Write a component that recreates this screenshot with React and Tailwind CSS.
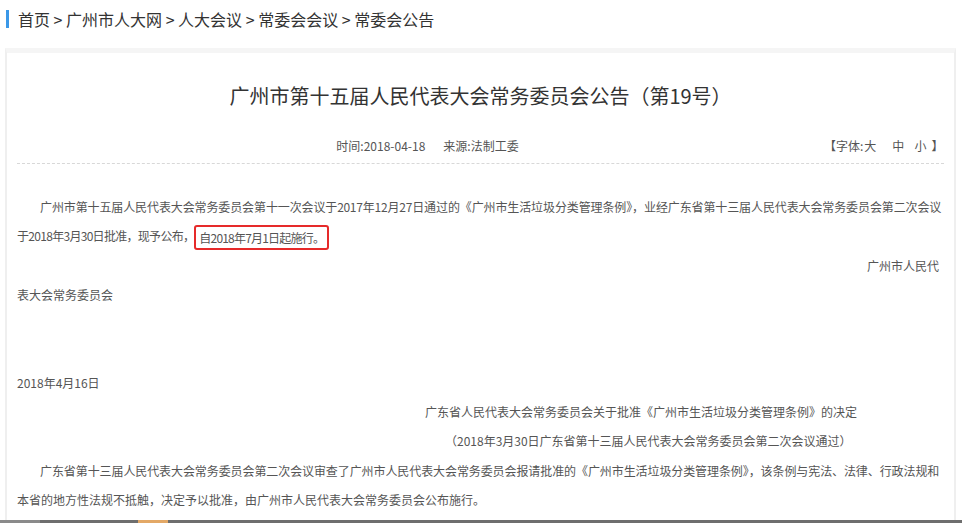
import React from "react";

const FONT = { fontFamily: '"Noto Sans CJK SC", "Noto Sans", sans-serif' };

export default function App() {
  return (
    <div className="h-[523px] w-full overflow-hidden bg-white flex flex-col" style={FONT}>
      {/* breadcrumb */}
      <div className="h-[48px] flex items-start pt-[7px] pl-[6px]">
        <div className="flex items-center h-[24px]">
          <span className="w-[3px] h-[18px] bg-[#3b98e8] mr-[9px]"></span>
          <span className="text-[16px] leading-[24px] text-[#333]">
            首页 &gt; 广州市人大网 &gt; 人大会议 &gt; 常委会会议 &gt; 常委会公告
          </span>
        </div>
      </div>

      {/* card */}
      <div className="flex-1 ml-[5px] mr-[6px] border-x-2 border-[#efefef] border-t-[5px] border-t-[#f5f5f5] px-[10px] min-h-0">
        <h1 className="pt-[28px] h-[58px] text-center text-[20px] leading-[30px] text-[#333] font-normal">
          广州市第十五届人民代表大会常务委员会公告（第19号）
        </h1>
        <div className="mt-[25px] flex h-[20px] items-center text-[12px] leading-[20px] text-[#555]">
          <div className="flex-1 min-w-0 text-center pl-[14px] whitespace-nowrap">
            <span>时间:2018-04-18</span>
            <span className="ml-[18px]">来源:法制工委</span>
          </div>
          <div className="w-[120px] shrink-0 flex whitespace-nowrap">
            <span>【字体:</span>
            <span className="ml-[1px]">大</span>
            <span className="ml-[16px]">中</span>
            <span className="ml-[10px]">小</span>
            <span className="ml-[5px]">】</span>
          </div>
        </div>
        <div className="mt-[7px] border-b border-dashed border-[#d8d8d8]"></div>

        <div className="pt-[28px] text-[12px] leading-[29.3px] text-[#555]">
          <div className="pl-[23px] pr-[3px] tracking-[-0.35px] text-justify [text-align-last:justify]">
            广州市第十五届人民代表大会常务委员会第十一次会议于2017年12月27日通过的《广州市生活垃圾分类管理条例》，业经广东省第十三届人民代表大会常务委员会第二次会议
          </div>
          <div className="h-[29.3px] tracking-[-0.7px] whitespace-nowrap">
            于2018年3月30日批准，现予公布，
            <span className="inline-block align-middle border-2 border-[#e62a2a] rounded-[3px] px-[3px] leading-[21px] -mt-[2px] tracking-[-0.8px]">
              自2018年7月1日起施行。
            </span>
          </div>
          <div className="text-right pr-[5px]">广州市人民代</div>
          <div>表大会常务委员会</div>
          <div className="h-[29.3px]"></div>
          <div className="h-[29.3px]"></div>
          <div>2018年4月16日</div>
          <div className="pl-[408px]">广东省人民代表大会常务委员会关于批准《广州市生活垃圾分类管理条例》的决定</div>
          <div className="pl-[428px]">（2018年3月30日广东省第十三届人民代表大会常务委员会第二次会议通过）</div>
          <div className="pl-[23px] pr-[5px] tracking-[-0.35px] text-justify [text-align-last:justify]">
            广东省第十三届人民代表大会常务委员会第二次会议审查了广州市人民代表大会常务委员会报请批准的《广州市生活垃圾分类管理条例》，该条例与宪法、法律、行政法规和
          </div>
          <div>本省的地方性法规不抵触，决定予以批准，由广州市人民代表大会常务委员会公布施行。</div>
        </div>
      </div>

      {/* bottom strip */}
      <div className="h-[3px] flex bg-[#6e6e6e]">
        <div className="w-[40px] bg-[#8a8a8a]"></div>
        <div className="w-[98px]"></div>
        <div className="w-[30px] bg-[#e3a866]"></div>
      </div>
    </div>
  );
}
